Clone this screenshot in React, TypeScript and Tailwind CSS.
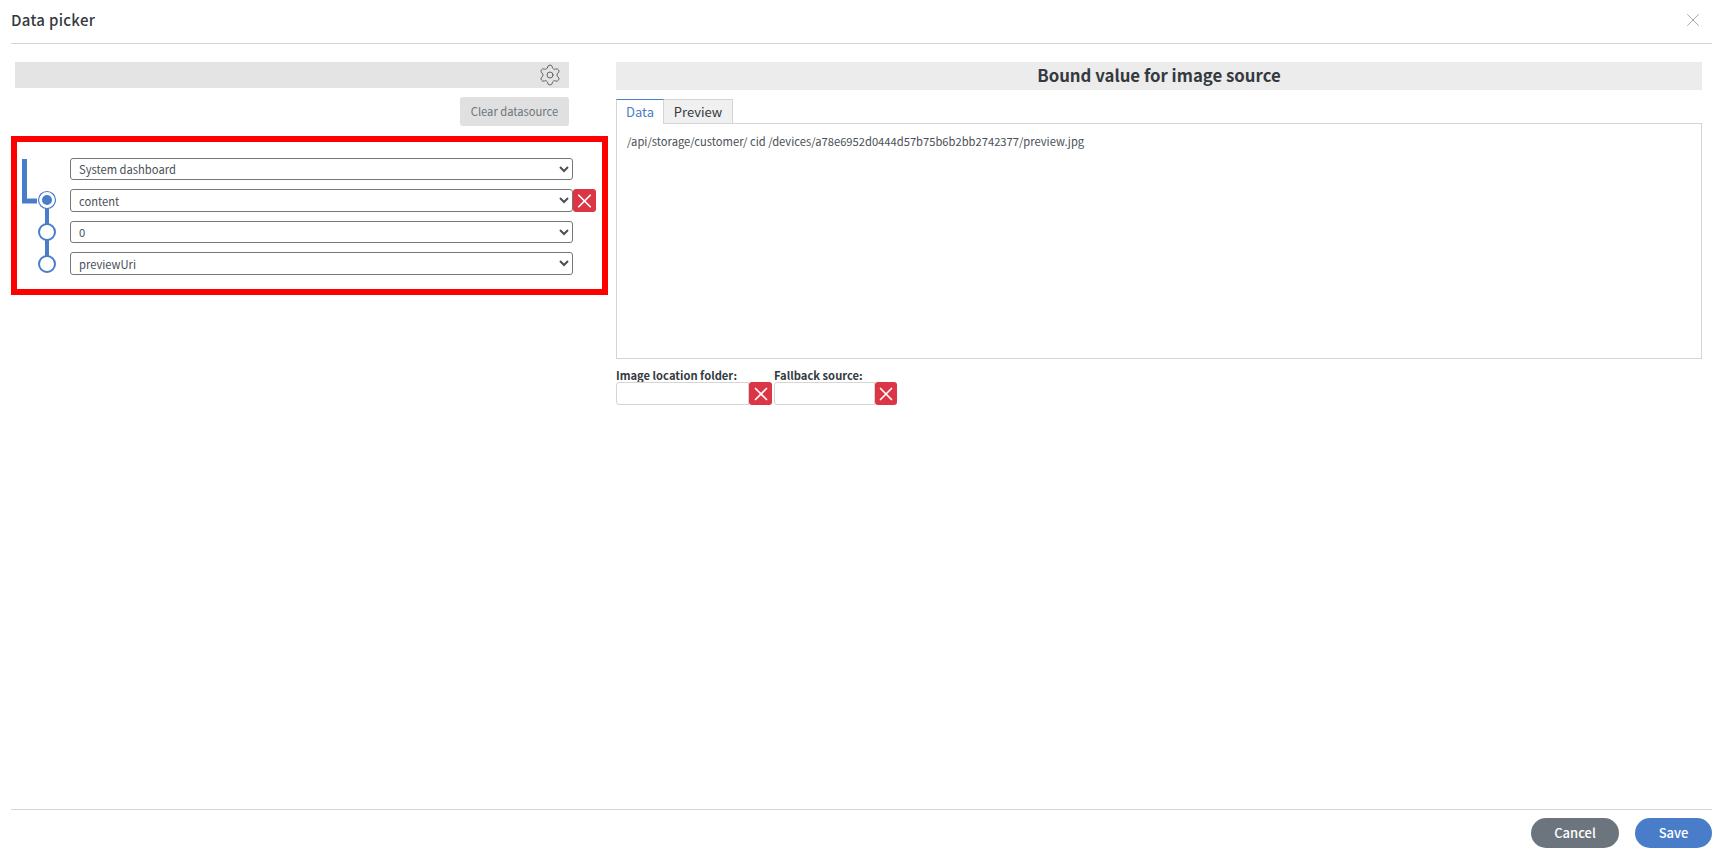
import { Settings, X } from "lucide-react";

const font = { fontFamily: '"Noto Sans CJK SC", "Noto Sans", sans-serif' };

function ClearButton({ className, size }: { className: string; size: number }) {
  return (
    <button className={`flex items-center justify-center rounded-[3px] bg-[#dc3545] text-white ${className}`}>
      <X size={size} strokeWidth={1.8} />
    </button>
  );
}

function PathSelect({ value, className }: { value: string; className: string }) {
  return (
    <select
      defaultValue={value}
      className={`block w-full rounded-[3px] border border-[#767676] bg-white pl-[4px] text-[11.2px] text-[#495057] ${className}`}
    >
      <option>{value}</option>
    </select>
  );
}

function PathTree() {
  return (
    <svg width="53" height="147" viewBox="0 0 53 147" className="shrink-0">
      <path d="M7.5 17V59H20" fill="none" stroke="#4a7dc9" strokeWidth="5" />
      <path d="M30 66V114" stroke="#4a7dc9" strokeWidth="4" />
      <circle cx="30" cy="58" r="8.5" fill="#fff" stroke="#4a7dc9" strokeWidth="1.2" />
      <circle cx="30" cy="58" r="5" fill="#4a7dc9" />
      <circle cx="30" cy="90" r="8" fill="#fff" stroke="#4a7dc9" strokeWidth="2" />
      <circle cx="30" cy="122" r="8" fill="#fff" stroke="#4a7dc9" strokeWidth="2" />
    </svg>
  );
}

export default function App() {
  return (
    <div style={font} className="flex h-[853px] flex-col bg-white text-[#343a40]">
      <header className="mr-[7px] ml-[11px] flex h-[44px] items-center justify-between border-b border-[#d4d4d4] pb-[3px]">
        <h1 className="text-[15px] font-medium tracking-[0.3px]">Data picker</h1>
        <X size={22} strokeWidth={0.8} className="mr-[8px] text-[#8a8a8a]" />
      </header>

      <main className="flex flex-1 pt-[18px]">
        <section className="ml-[11px] w-[597px]">
          <div className="ml-[4px] flex h-[26px] w-[554px] items-center justify-end bg-[#e4e4e4] pr-[7px]">
            <Settings size={24} strokeWidth={0.9} className="text-[#555]" />
          </div>
          <div className="mt-[9px] flex w-[558px] justify-end">
            <button className="h-[29px] w-[109px] rounded-[3px] bg-[#e0e0e0] text-[11.2px] text-[#6c757d]">
              Clear datasource
            </button>
          </div>
          <div className="mt-[10px] flex h-[159px] border-[6px] border-[#ff0000]">
            <PathTree />
            <div className="w-[503px] pt-[16px]">
              <PathSelect value="System dashboard" className="h-[22px]" />
              <div className="mt-[9px] flex w-[526px]">
                <PathSelect value="content" className="h-[23px]" />
                <ClearButton size={24} className="h-[23px] w-[23px] shrink-0" />
              </div>
              <PathSelect value="0" className="mt-[9px] h-[22px]" />
              <PathSelect value="previewUri" className="mt-[9px] h-[23px]" />
            </div>
          </div>
        </section>

        <section className="ml-[8px] w-[1086px]">
          <h2 className="flex h-[28px] items-center justify-center bg-[#ececec] text-[16.8px] font-bold">
            Bound value for image source
          </h2>
          <div className="mt-[9px] flex h-[25px] text-[13px]">
            <div className="flex w-[48px] items-center justify-center border-x border-t border-[#d5d5d5] border-t-[#4a7dc9] text-[#4a7dc9]">
              Data
            </div>
            <div className="flex w-[69px] items-center justify-center border-y border-r border-[#d5d5d5] bg-[#f0f0f0]">
              Preview
            </div>
            <div className="flex-1 border-b border-[#d5d5d5]" />
          </div>
          <div className="h-[235px] border border-t-0 border-[#d5d5d5] px-[10px] pt-[9px] text-[11.2px] text-[#495057]">
            /api/storage/customer/ cid /devices/a78e6952d0444d57b75b6b2bb2742377/preview.jpg
          </div>
          <div className="mt-[9px] flex gap-[2px]">
            <div className="w-[156px]">
              <label className="block text-[11.2px] leading-[14px] font-bold">Image location folder:</label>
              <div className="flex h-[23px]">
                <input className="w-[133px] rounded-l-[3px] border border-[#d5d5d5]" />
                <ClearButton size={22} className="w-[23px]" />
              </div>
            </div>
            <div className="w-[123px]">
              <label className="block text-[11.2px] leading-[14px] font-bold">Fallback source:</label>
              <div className="flex h-[23px]">
                <input className="w-[101px] rounded-l-[3px] border border-[#d5d5d5]" />
                <ClearButton size={22} className="w-[22px]" />
              </div>
            </div>
          </div>
        </section>
      </main>

      <footer className="mr-[7px] ml-[11px] flex h-[44px] items-start justify-end gap-[16px] border-t border-[#d4d4d4] pt-[8px]">
        <button className="h-[30px] w-[88px] rounded-full bg-[#6c757d] text-[13px] font-medium text-white">Cancel</button>
        <button className="h-[30px] w-[77px] rounded-full bg-[#4a7dc9] text-[13px] font-medium text-white">Save</button>
      </footer>
    </div>
  );
}
